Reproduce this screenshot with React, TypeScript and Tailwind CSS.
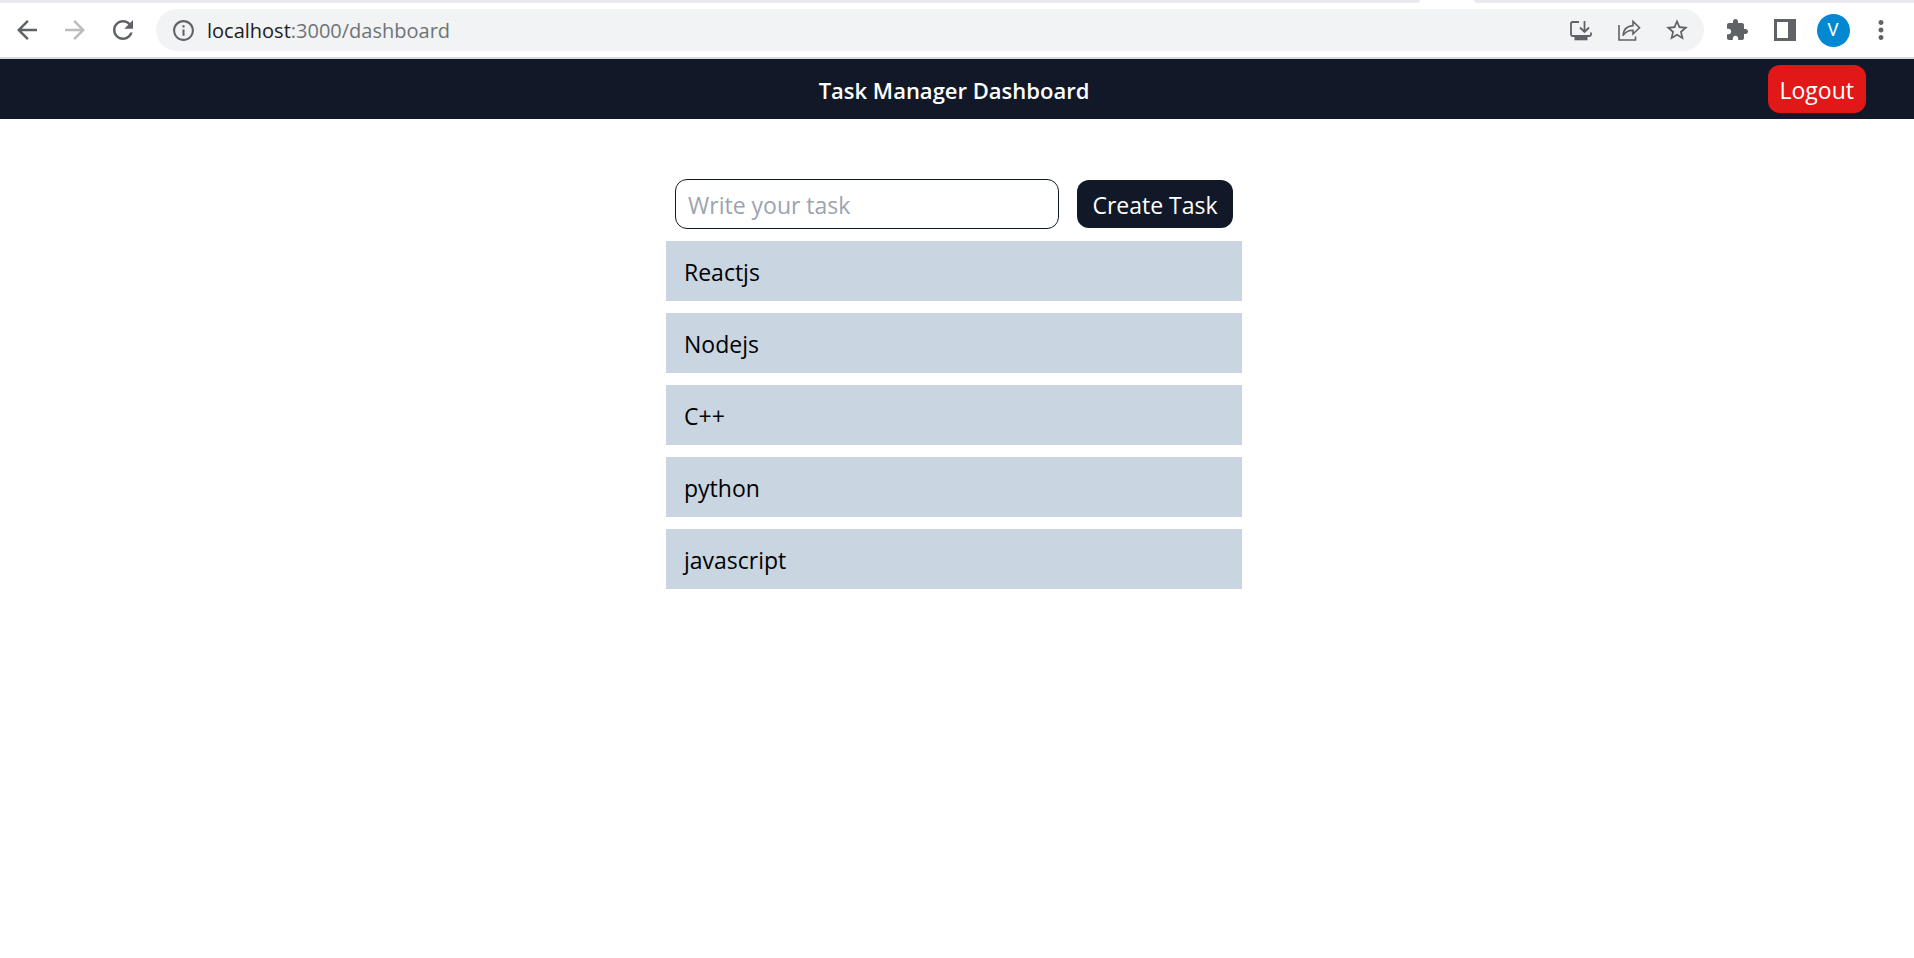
import React, { useState } from "react";

const FONT = "font-['Open_Sans','Noto_Sans',sans-serif]";

function ToolbarIcon({ label, children, className = "text-[#5f6368]" }: { label: string; children: React.ReactNode; className?: string }) {
  return (
    <button type="button" aria-label={label} className={`flex h-[42px] w-12 shrink-0 items-center justify-center ${className}`}>
      {children}
    </button>
  );
}

function Glyph({ d, className = "size-[30px]" }: { d: string; className?: string }) {
  return (
    <svg viewBox="0 0 24 24" fill="currentColor" aria-hidden="true" className={className}>
      <path d={d} />
    </svg>
  );
}

function BrowserBar() {
  return (
    <div className="border-b-2 border-[#d9d9db] bg-white">
      <div className="flex h-[3px] justify-between" aria-hidden="true">
        <span className="flex-1 rounded-br-[6px] bg-[#e8eaed]" />
        <span className="w-[54px]" />
        <span className="w-[440px] rounded-bl-[6px] bg-[#e8eaed]" />
      </div>
      <div className="flex h-[54px] items-center pl-[3px] pr-[9px]">
        <ToolbarIcon label="Back">
          <Glyph d="M20 11H7.83l5.59-5.59L12 4l-8 8 8 8 1.41-1.41L7.83 13H20v-2z" />
        </ToolbarIcon>
        <ToolbarIcon label="Forward" className="text-[#babcbe]">
          <Glyph d="M12 4l-1.41 1.41L16.17 11H4v2h12.17l-5.58 5.59L12 20l8-8z" />
        </ToolbarIcon>
        <ToolbarIcon label="Reload">
          <Glyph d="M17.65 6.35C16.2 4.9 14.21 4 12 4c-4.42 0-7.99 3.58-7.99 8s3.57 8 7.99 8c3.73 0 6.84-2.55 7.73-6h-2.08c-.82 2.33-3.04 4-5.65 4-3.31 0-6-2.69-6-6s2.69-6 6-6c1.66 0 3.14.69 4.22 1.78L13 11h7V4l-2.35 2.35z" />
        </ToolbarIcon>
        <div className="mx-[9px] flex h-[42px] min-w-0 flex-1 items-center rounded-full bg-[#f1f3f4] pl-[15px] pr-[3px]">
          <span className="text-[#5f6368]">
            <Glyph className="size-[25px]" d="M11 7h2v2h-2zm0 4h2v6h-2zm1-9C6.48 2 2 6.48 2 12s4.48 10 10 10 10-4.48 10-10S17.52 2 12 2zm0 18c-4.41 0-8-3.59-8-8s3.59-8 8-8 8 3.59 8 8-3.59 8-8 8z" />
          </span>
          <span className="ml-[11px] min-w-0 flex-1 truncate pt-0.5 text-[20px] leading-[30px] text-[#6f7377]">
            <span className="text-[#202124]">localhost</span>:3000/dashboard
          </span>
          <ToolbarIcon label="Install app">
            <svg viewBox="0 0 24 24" fill="none" stroke="currentColor" strokeWidth="1.8" aria-hidden="true" className="size-6">
              <path d="M10 4H3.500Q2 4 2 5.500V16.500Q2 18 3.500 18H20.500Q22 18 22 16.500V14.500" />
              <path d="M15.500 3V13.500M11 9.500L15.500 14L20 9.500" />
              <path d="M5.500 20.500H18.500" strokeWidth="3.6" />
            </svg>
          </ToolbarIcon>
          <ToolbarIcon label="Share">
            <svg viewBox="0 0 24 24" fill="none" stroke="currentColor" strokeWidth="1.6" aria-hidden="true" className="size-6">
              <path d="M2 7V22H18.500V18.500" />
              <path d="M6 17.500C6.500 11.500 10 8 16 7.600V3.500L22.500 9.800L16 16V12.200C11.500 12.200 8.500 13.600 6 17.500Z" />
            </svg>
          </ToolbarIcon>
          <ToolbarIcon label="Bookmark">
            <Glyph className="size-[26px]" d="M22 9.240l-7.190-.62L12 2 9.190 8.630 2 9.240l5.460 4.730L5.820 21 12 17.270 18.180 21l-1.630-7.030L22 9.240zM12 15.400l-3.760 2.270 1-4.280-3.320-2.880 4.380-.38L12 6.100l1.710 4.040 4.380.38-3.320 2.880 1 4.280L12 15.400z" />
          </ToolbarIcon>
        </div>
        <ToolbarIcon label="Extensions">
          <Glyph className="size-6" d="M20.500 11H19V7c0-1.100-.9-2-2-2h-4V3.500C13 2.120 11.880 1 10.500 1S8 2.120 8 3.500V5H4c-1.100 0-1.990.9-1.990 2v3.800H3.500c1.490 0 2.700 1.210 2.700 2.700s-1.210 2.700-2.700 2.700H2V20c0 1.100.9 2 2 2h3.800v-1.500c0-1.490 1.210-2.700 2.700-2.700 1.490 0 2.700 1.210 2.700 2.700V22H17c1.100 0 2-.9 2-2v-4h1.500c1.380 0 2.500-1.120 2.500-2.500S21.880 11 20.500 11z" />
        </ToolbarIcon>
        <ToolbarIcon label="Side panel">
          <svg viewBox="0 0 22 22" aria-hidden="true" className="size-[22px]">
            <path fill="currentColor" fillRule="evenodd" d="M0 0H22V22H0ZM3 3V19H14V3Z" />
          </svg>
        </ToolbarIcon>
        <ToolbarIcon label="Profile">
          <span className="flex size-[33px] items-center justify-center rounded-full bg-[#0288d1] font-[Roboto,sans-serif] text-[18px] leading-none text-white">V</span>
        </ToolbarIcon>
        <ToolbarIcon label="Menu">
          <Glyph d="M12 8c1.100 0 2-.9 2-2s-.9-2-2-2-2 .9-2 2 .9 2 2 2zm0 2c-1.100 0-2 .9-2 2s.9 2 2 2 2-.9 2-2-.9-2-2-2zm0 6c-1.100 0-2 .9-2 2s.9 2 2 2 2-.9 2-2-.9-2-2-2z" />
        </ToolbarIcon>
      </div>
    </div>
  );
}

export default function App() {
  const [tasks, setTasks] = useState(["Reactjs", "Nodejs", "C++", "python", "javascript"]);
  const [draft, setDraft] = useState("");

  const createTask = (event: React.FormEvent) => {
    event.preventDefault();
    if (draft.trim()) {
      setTasks([...tasks, draft.trim()]);
      setDraft("");
    }
  };

  return (
    <div className={`min-h-screen bg-white text-[23px] leading-9 text-black ${FONT}`}>
      <BrowserBar />
      <header className="grid grid-cols-[1fr_auto_1fr] items-center bg-[#111827] py-1.5 pl-[42px] pr-12 text-white">
        <h1 className="col-start-2 pt-0.5 text-[22px] font-semibold">Task Manager Dashboard</h1>
        <button type="button" className="justify-self-end rounded-xl bg-[#e21818] px-3 pb-[5px] pt-[7px]">Logout</button>
      </header>
      <main className="pr-1.5 pt-[60px]">
        <div className="mx-auto max-w-[576px]">
          <form onSubmit={createTask} className="flex items-center gap-[18px] px-[9px]">
            <input
              type="text"
              aria-label="Task"
              placeholder="Write your task"
              value={draft}
              onChange={(event) => setDraft(event.target.value)}
              className="min-w-0 flex-1 rounded-xl border border-[#111827] px-3 pb-[5px] pt-[7px] placeholder:text-[#9ca3af]"
            />
            <button type="submit" className="w-[156px] rounded-xl bg-[#111827] pb-[5px] pt-[7px] text-white">Create Task</button>
          </form>
          <ul className="mt-3 flex flex-col gap-3">
            {tasks.map((task, index) => (
              <li key={index} className="bg-[#c9d5e1] px-[18px] pb-[11px] pt-[13px]">{task}</li>
            ))}
          </ul>
        </div>
      </main>
    </div>
  );
}
